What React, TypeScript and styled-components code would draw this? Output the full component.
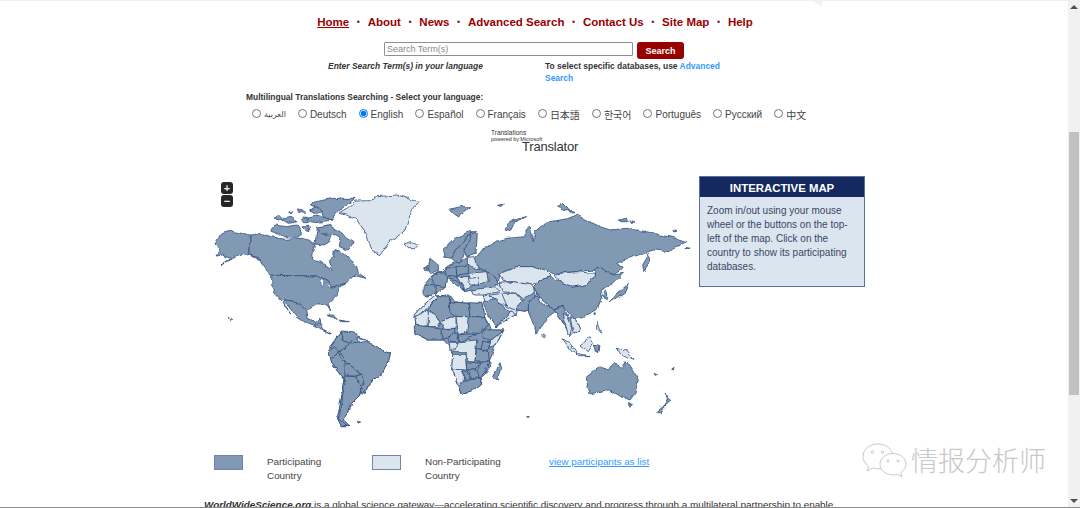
import styled, { createGlobalStyle } from "styled-components";

const GlobalStyle = createGlobalStyle`
    html, body {
        margin: 0;
        padding: 0;
        background: #fff;
        overflow: hidden;
    }
    body {
        font-family: "Liberation Sans", Arial, sans-serif;
    }
`;

type Tone = "on" | "off" | "water";
type Land = [Tone, string];

const navLinks = ["Home", "About", "News", "Advanced Search", "Contact Us", "Site Map", "Help"];

const languages = [
    "العربية",
    "Deutsch",
    "English",
    "Español",
    "Français",
    "日本語",
    "한국어",
    "Português",
    "Русский",
    "中文",
];

// traced off the screenshot, 3 map units = 1px
const westLands: Land[] = [
    ["on", "390,530 425,483 470,500 505,512 520,530 572,550 565,575 545,615 515,630 495,670 480,675 455,700 445,730 430,750 450,770 425,770 410,740 420,690 432,630 395,580 388,545"],
    ["on", "45,222 55,205 62,192 92,183 150,195 150,255 172,262 195,288 178,272 150,256 125,250 100,265 60,287 92,266 70,255 48,258 60,240"],
    ["on", "345,222 352,172 385,165 395,190 385,218 372,225"],
    ["on", "150,195 185,190 212,200 240,205 255,208 300,205 330,210 345,222 335,258 345,272 360,275 382,290 397,302 385,275 400,262 403,238 425,245 445,262 470,290 475,308 498,325 470,318 452,322 440,340 415,345 395,352 385,335 365,325 350,318 220,316 205,308 188,285 172,262 150,255"],
    ["on", "352,172 385,165 420,185 462,215 445,240 415,230 420,205 395,190 365,195"],
    ["on", "212,180 225,165 260,170 290,165 305,190 290,202 250,200 235,190"],
    ["on", "222,145 240,133 250,145 235,150"],
    ["on", "245,148 270,142 290,155 265,160"],
    ["on", "262,125 275,128 270,135"],
    ["on", "292,120 310,122 316,130 300,128"],
    ["on", "305,145 320,140 325,155 310,155"],
    ["on", "305,170 325,165 330,185 315,180"],
    ["on", "345,95 400,85 465,85 420,120 395,150 370,140 360,115 330,105"],
    ["on", "325,120 350,110 365,125 350,130"],
    ["on", "322,142 350,135 395,150 350,158 330,155"],
    ["off", "420,130 445,115 465,93 520,92 530,80 590,75 620,85 660,97 640,115 630,135 615,180 605,190 570,215 540,255 515,240 500,190 470,150 440,135"],
    ["on", "215,316 350,318 365,325 385,335 395,352 415,345 440,340 420,350 410,375 385,400 392,425 382,405 350,405 325,418 315,415 290,398 270,395 245,392 225,370 215,345"],
    ["water", "360,328 372,332 368,350 360,345"],
    ["water", "378,340 392,345 388,352"],
    ["on", "250,393 270,395 300,400 320,420 325,445 345,455 360,445 362,460 345,470 320,460 290,440 270,410"],
    ["on", "250,397 275,435 258,412"],
    ["on", "345,462 362,458 368,480 395,495 385,490 360,478 345,468"],
    ["on", "375,436 400,435 415,448 395,442"],
    ["on", "420,450 445,455 425,455"],
    ["on", "85,442 88,444 86,446"],
    ["on", "91,448 96,450 92,452"],
    ["on", "425,483 460,485 470,500 445,520 425,510"],
    ["off", "470,505 505,510 490,520 475,515"],
    ["on", "390,530 405,510 425,483 425,510 445,520 435,545 420,545 415,560 395,535"],
    ["on", "388,545 400,530 415,545 400,565 390,560"],
    ["on", "392,565 415,550 425,570 440,575 435,605 440,635 430,625 395,580"],
    ["on", "420,545 445,522 475,520 505,512 520,530 572,550 565,575 545,615 515,630 495,670 480,650 495,640 480,610 460,590 435,570"],
    ["on", "435,572 460,590 480,615 465,618 435,618"],
    ["on", "468,620 483,612 495,635 480,645"],
    ["on", "435,618 465,620 485,650 480,675 455,700 445,730 430,750 450,770 425,765 415,745 425,700 430,650"],
    ["on", "432,630 420,690 410,740 425,770 440,770 415,745 425,690 435,640"],
    ["on", "480,655 497,660 485,672"],
    ["on", "467,752 480,752 472,756"],
];

const eastLands: Land[] = [
    ["on", "105,378 145,375 165,395 205,400 245,400 255,440 272,480 312,480 285,530 268,570 272,590 240,625 245,640 220,660 185,670 175,640 155,597 158,553 150,530 130,510 85,510 45,490 42,435 65,410"],
    ["on", "72,345 95,318 130,300 140,290 205,262 225,290 270,310 295,340 300,365 250,375 215,360 195,365 170,335 140,322 135,350 105,372 80,378"],
    ["off", "270,350 300,340 400,350 420,385 385,425 350,420 345,435 285,468 265,435 250,375"],
    ["off", "462,420 505,440 525,445 540,480 520,490 510,500 498,470 480,445"],
    ["off", "15,222 35,215 55,222 45,233 25,233"],
    ["on", "150,118 180,110 215,110 195,125 175,140 160,130"],
    ["on", "292,105 310,103 302,110"],
    ["on", "315,180 325,160 355,145 380,140 345,155 330,185"],
    ["on", "473,105 490,100 510,120 490,125"],
    ["on", "505,122 525,128 510,130"],
    ["on", "652,150 680,145 682,155 660,155"],
    ["on", "690,152 705,156 695,157"],
    ["on", "818,182 830,184 822,186"],
    ["on", "222,270 250,235 285,215 320,205 375,200 375,180 390,168 400,215 405,180 450,155 505,145 530,135 560,150 600,170 630,180 680,175 740,185 780,195 830,205 860,215 820,235 810,245 760,240 700,260 650,280 670,295 640,315 600,295 585,300 530,305 465,310 440,305 400,290 350,290 300,310 295,340 270,310 225,290"],
    ["on", "745,250 750,275 730,305 725,285"],
    ["on", "855,235 865,238 858,238"],
    ["off", "297,312 350,290 400,290 440,305 455,320 420,330 395,345 340,335 310,335"],
    ["off", "465,312 530,305 585,310 582,325 555,345 520,352 480,335"],
    ["on", "400,350 420,330 455,320 480,335 520,352 555,345 582,325 585,298 605,295 640,315 670,310 635,345 600,360 605,385 590,420 550,440 520,445 490,410 460,420 420,385 410,365"],
    ["on", "385,395 410,375 425,400 460,420 490,410 465,425 445,440 425,470 412,495 395,450 385,425"],
    ["off", "426,492 433,495 431,503 426,501"],
    ["off", "300,340 340,335 395,345 400,350 405,375 380,395 350,370 310,365"],
    ["off", "310,370 350,370 370,395 350,420 320,410 300,380"],
    ["on", "350,415 375,385 400,370 410,378 385,395 385,425 350,420"],
    ["off", "215,360 285,350 300,365 250,375 220,375"],
    ["off", "270,375 305,370 320,405 290,395"],
    ["on", "250,395 285,385 310,410 335,430 310,450 285,468 265,435 252,408"],
    ["off", "285,470 310,450 335,420 345,435"],
    ["on", "130,240 165,205 210,185 230,185 195,205 170,240 155,265 135,262"],
    ["on", "170,240 195,205 215,190 215,215 190,250 180,280 165,275 155,265"],
    ["on", "215,190 232,190 228,250 200,260 192,245"],
    ["on", "85,300 90,265 115,285 115,305 90,310"],
    ["on", "70,295 85,285 80,303"],
    ["on", "95,318 130,305 140,320 135,350 105,345"],
    ["on", "72,345 105,348 105,372 80,378 72,370"],
    ["on", "135,295 170,290 170,320 140,320"],
    ["on", "168,290 205,285 205,310 170,315"],
    ["off", "205,262 225,260 235,300 205,285"],
    ["off", "205,310 260,305 265,335 225,345 205,325"],
    ["on", "140,322 170,330 195,365 175,350"],
    ["off", "170,320 205,320 220,345 195,360"],
    ["off", "205,325 235,322 235,345 210,345"],
    ["off", "65,410 100,380 115,378 85,412 45,445 42,435"],
    ["on", "85,415 115,378 148,378 150,420 168,435 120,455"],
    ["off", "42,440 82,420 100,465 65,470 45,465"],
    ["off", "85,420 120,455 110,470 85,470"],
    ["on", "148,395 205,400 210,440 170,440 150,425"],
    ["on", "205,398 245,400 255,440 210,440"],
    ["off", "120,455 168,435 168,475 130,475"],
    ["off", "168,440 205,440 205,485 175,495"],
    ["on", "205,440 255,440 262,465 250,480 240,490 200,488"],
    ["on", "245,480 272,480 310,480 275,510 250,505"],
    ["off", "310,480 285,530 270,535 275,510"],
    ["on", "42,465 130,475 130,510 85,510 45,490"],
    ["on", "122,478 165,475 160,500 130,508"],
    ["on", "160,490 172,490 178,520 145,515"],
    ["on", "175,495 230,490 200,510 175,515"],
    ["off", "178,515 230,510 225,572 205,572 195,545 155,545 150,530"],
    ["off", "148,520 172,520 165,540 150,540"],
    ["on", "245,515 275,515 265,545 240,540"],
    ["on", "230,535 265,545 268,570 245,580 225,570"],
    ["off", "158,553 195,553 200,600 155,597"],
    ["off", "155,597 190,600 190,650 175,640"],
    ["on", "245,585 270,570 265,590 240,620 238,640 228,610"],
    ["on", "200,575 245,580 225,600 200,600"],
    ["on", "200,600 228,600 235,620 215,625"],
    ["on", "190,600 215,625 195,635"],
    ["on", "178,645 195,635 215,625 238,625 245,640 220,660 185,670"],
    ["on", "300,578 305,595 292,630 280,622"],
    ["on", "462,420 490,410 505,440 498,470 480,445"],
    ["off", "490,430 505,440 515,470 510,500 498,470"],
    ["off", "510,440 525,445 540,480 520,490"],
    ["off", "487,505 510,520 535,555 515,545"],
    ["off", "525,553 570,560 535,560"],
    ["off", "540,525 570,500 580,520 565,545"],
    ["on", "585,525 600,530 597,545 588,540"],
    ["off", "645,535 680,540 705,568 670,555"],
    ["off", "590,455 605,490 590,475"],
    ["on", "625,395 670,355 685,340 675,365 640,390"],
    ["on", "610,365 620,360 620,385 610,385"],
    ["on", "585,428 590,430 586,436"],
    ["on", "558,625 600,590 625,600 640,578 665,595 675,572 715,630 705,670 690,690 660,678 630,660 570,675"],
    ["on", "682,698 697,700 690,712"],
    ["on", "795,672 815,688 795,705 802,685"],
    ["on", "770,725 795,705 785,725"],
    ["on", "815,598 822,592 820,600"],
    ["on", "763,610 770,614 765,616"],
    ["on", "380,740 388,740 384,743"],
];

export default function App() {
    return (
        <Page>
            <GlobalStyle />
            <Main>
                <TopCorner />
                <Nav>
                    {navLinks.map((link, ind) => (
                        <NavItem key={link}>
                            {ind > 0 && <NavDot>•</NavDot>}
                            <NavLink $active={ind === 0}>{link}</NavLink>
                        </NavItem>
                    ))}
                </Nav>
                <SearchRow>
                    <SearchInput placeholder="Search Term(s)" />
                    <SearchButton>Search</SearchButton>
                </SearchRow>
                <HintRow>
                    <HintLeft>Enter Search Term(s) in your language</HintLeft>
                    <HintRight>
                        To select specific databases, use <BlueLink>Advanced Search</BlueLink>
                    </HintRight>
                </HintRow>
                <LangTitle>Multilingual Translations Searching - Select your language:</LangTitle>
                <LangRow>
                    {languages.map((lang, ind) => (
                        <LangLabel key={lang}>
                            <Radio type="radio" name="lang" defaultChecked={lang === "English"} />
                            <LangName $small={ind === 0}>{lang}</LangName>
                        </LangLabel>
                    ))}
                </LangRow>
                <TranslatorLogo>
                    <LogoTiny>Translations</LogoTiny>
                    <LogoPowered>powered by Microsoft</LogoPowered>
                    <LogoName>Translator</LogoName>
                </TranslatorLogo>
                <MapRow>
                    <MapBox>
                        <ZoomButtons>
                            <ZoomButton>+</ZoomButton>
                            <ZoomButton>−</ZoomButton>
                        </ZoomButtons>
                        <svg width="500" height="270" viewBox="0 0 1500 810">
                            <defs>
                                <filter id="coast" x="0" y="0" width="100%" height="100%">
                                    <feTurbulence type="fractalNoise" baseFrequency="0.035" numOctaves="3" seed="4" />
                                    <feDisplacementMap in="SourceGraphic" scale="14" xChannelSelector="R" yChannelSelector="G" />
                                    <feGaussianBlur stdDeviation="0.7" />
                                </filter>
                            </defs>
                            <g filter="url(#coast)">
                                <rect width="1500" height="810" fill="none" />
                                {westLands.map(([tone, points], ind) => (
                                    <Country key={ind} $tone={tone} points={points} />
                                ))}
                                <g transform="translate(600 0)">
                                    {eastLands.map(([tone, points], ind) => (
                                        <Country key={ind} $tone={tone} points={points} />
                                    ))}
                                </g>
                            </g>
                        </svg>
                    </MapBox>
                    <InfoPanel>
                        <InfoHead>INTERACTIVE MAP</InfoHead>
                        <InfoBody>
                            Zoom in/out using your mouse wheel or the buttons on the top-left of the
                            map. Click on the country to show its participating databases.
                        </InfoBody>
                    </InfoPanel>
                </MapRow>
                <Legend>
                    <Swatch $on />
                    <LegendText>
                        Participating
                        <br />
                        Country
                    </LegendText>
                    <Swatch />
                    <LegendText>
                        Non-Participating
                        <br />
                        Country
                    </LegendText>
                    <ListLink>view participants as list</ListLink>
                </Legend>
                <Intro>
                    <b>
                        <i>WorldWideScience.org</i>
                    </b>{" "}
                    is a global science gateway—accelerating scientific discovery and progress
                    through a multilateral partnership to enable
                </Intro>
            </Main>
            <ScrollTrack>
                <ArrowUp />
                <ScrollThumb />
                <ArrowDown />
            </ScrollTrack>
            <Watermark>
                <svg width="48" height="34" viewBox="0 0 48 34" fill="#fff" stroke="#c9c9c9" strokeWidth="1">
                    <path d="M16 1C7.5 1 1 6.5 1 13.5c0 4 2.2 7.4 5.6 9.7L5 28l5.6-3c1.8.5 3.6.8 5.4.8 8.5 0 15-5.6 15-12.3S24.5 1 16 1z" />
                    <path d="M31 10.5c-7.2 0-13 4.8-13 10.7s5.8 10.7 13 10.7c1.5 0 2.9-.2 4.2-.6l4.8 2.5-1.3-4.2c3.3-2 5.3-5 5.3-8.4 0-5.9-5.8-10.7-13-10.7z" />
                    <circle cx="10.5" cy="9" r="1.3" />
                    <circle cx="20.5" cy="9" r="1.3" />
                    <circle cx="26" cy="18" r="1.1" />
                    <circle cx="36" cy="18" r="1.1" />
                </svg>
                <WatermarkText>情报分析师</WatermarkText>
            </Watermark>
        </Page>
    );
}

const Page = styled.div`
    position: relative;
    display: flex;
    width: 1080px;
    height: 508px;
    box-sizing: border-box;
    border-bottom: 1px solid #8a8a8a;
    overflow: hidden;
`;

const Main = styled.div`
    position: relative;
    flex: 1;
    min-width: 0;
    border-top: 1px solid #eef0f6;
`;

const TopCorner = styled.div`
    position: absolute;
    top: 0;
    left: 813px;
    border-top: 6px solid #eef1f6;
    border-left: 9px solid transparent;
`;

const Nav = styled.div`
    display: flex;
    justify-content: center;
    align-items: center;
    height: 13px;
    margin-top: 14px;
    padding-left: 2px;
`;

const NavItem = styled.div`
    display: flex;
    align-items: center;
`;

const NavDot = styled.span`
    width: 18.5px;
    text-align: center;
    font-size: 9px;
    color: #8a2020;
`;

const NavLink = styled.a<{ $active?: boolean }>`
    font-size: 11.5px;
    font-weight: 700;
    color: #990000;
    text-decoration: ${(props) => (props.$active ? "underline" : "none")};
`;

const SearchRow = styled.div`
    display: flex;
    align-items: flex-start;
    gap: 4px;
    margin-top: 14px;
    padding-left: 384px;
`;

const SearchInput = styled.input`
    width: 249px;
    height: 14px;
    box-sizing: border-box;
    padding: 0 2px;
    border: 1px solid #8f8f8f;
    border-radius: 1px;
    font-family: "Liberation Sans", Arial, sans-serif;
    font-size: 9px;
    outline: none;

    &::placeholder {
        color: #8a8a8a;
    }
`;

const SearchButton = styled.button`
    width: 47px;
    height: 17px;
    padding: 0;
    border: none;
    border-radius: 3px;
    background: #990000;
    color: #fff;
    font-family: "Liberation Sans", Arial, sans-serif;
    font-size: 9px;
    font-weight: 700;
`;

const HintRow = styled.div`
    display: grid;
    grid-template-columns: 217px 176px;
    margin-top: 1px;
    padding-left: 328px;
    font-size: 8.45px;
    line-height: 12px;
    font-weight: 700;
    color: #333;
`;

const HintLeft = styled.div`
    font-style: italic;
`;

const HintRight = styled.div``;

const BlueLink = styled.a`
    color: #3399ff;
`;

const LangTitle = styled.div`
    margin-top: 7px;
    padding-left: 246px;
    font-size: 8.45px;
    line-height: 12px;
    font-weight: 700;
    color: #333;
`;

const LangRow = styled.div`
    display: flex;
    gap: 12px;
    margin-top: 3px;
    padding-left: 252px;
    height: 16px;
    align-items: center;
`;

const LangLabel = styled.label`
    display: flex;
    align-items: center;
    gap: 3px;
    color: #444;
    font-family: "Liberation Sans", "DejaVu Sans", "Noto Sans CJK JP", sans-serif;
`;

const LangName = styled.span<{ $small?: boolean }>`
    font-size: ${(props) => (props.$small ? "8px" : "10px")};
`;

const Radio = styled.input`
    width: 9px;
    height: 9px;
    margin: 0 0 2px;
`;

const TranslatorLogo = styled.div`
    display: flex;
    flex-direction: column;
    margin-top: 7px;
    margin-left: 491px;
    width: 90px;
    height: 27px;
    color: #333;
`;

const LogoTiny = styled.span`
    font-size: 6.5px;
    line-height: 7px;
`;

const LogoPowered = styled.span`
    font-size: 5.4px;
    line-height: 6px;
`;

const LogoName = styled.span`
    margin-left: 31px;
    margin-top: -2px;
    font-size: 13px;
    line-height: 14px;
    letter-spacing: -0.2px;
`;

const MapRow = styled.div`
    display: flex;
    align-items: flex-start;
    margin-top: 14px;
    padding-left: 200px;
`;

const MapBox = styled.div`
    position: relative;
    width: 499px;
    height: 270px;
`;

const ZoomButtons = styled.div`
    position: absolute;
    top: 12px;
    left: 21px;
    display: flex;
    flex-direction: column;
    gap: 1px;
`;

const ZoomButton = styled.div`
    width: 12px;
    height: 12px;
    border-radius: 3px;
    background: #262626;
    color: #e4eef8;
    font-size: 11px;
    line-height: 12px;
    font-weight: 700;
    text-align: center;
`;

const Country = styled.polygon<{ $tone: Tone }>`
    fill: ${(props) =>
        props.$tone === "on" ? "#8299b3" : props.$tone === "off" ? "#dbe5ee" : "#fff"};
    stroke: ${(props) => (props.$tone === "water" ? "#54709a" : "#34517f")};
    stroke-width: 2.5;
    stroke-linejoin: round;
`;

const InfoPanel = styled.div`
    width: 166px;
    height: 111px;
    box-sizing: border-box;
    margin-top: 6px;
    border: 1px solid #5d6f9e;
    background: #dae5ef;
`;

const InfoHead = styled.div`
    height: 20px;
    background: #14295f;
    color: #fff;
    font-size: 11.4px;
    line-height: 22px;
    font-weight: 700;
    text-align: center;
`;

const InfoBody = styled.div`
    padding: 7px 7px 0;
    font-size: 10px;
    line-height: 14px;
    color: #3c4666;
`;

const Legend = styled.div`
    display: grid;
    grid-template-columns: 29px 81px 29px 100px auto;
    column-gap: 24px;
    margin-top: 15px;
    padding-left: 214px;
`;

const Swatch = styled.div<{ $on?: boolean }>`
    height: 15px;
    box-sizing: border-box;
    border: 1px solid #6f84a8;
    background: ${(props) => (props.$on ? "#8299b3" : "#dbe5ee")};
`;

const LegendText = styled.div`
    font-size: 9.9px;
    line-height: 14px;
    color: #444;
`;

const ListLink = styled.a`
    font-size: 9.8px;
    line-height: 14px;
    color: #3399ff;
    text-decoration: underline;
`;

const Intro = styled.div`
    margin-top: 15px;
    padding-left: 204px;
    font-size: 9.9px;
    line-height: 14px;
    color: #333;
    white-space: nowrap;
`;

const ScrollTrack = styled.div`
    display: flex;
    flex-direction: column;
    align-items: center;
    width: 12px;
    background: #f1f1f1;
`;

const ArrowUp = styled.div`
    margin-top: 5px;
    border-bottom: 4px solid #505050;
    border-left: 4px solid transparent;
    border-right: 4px solid transparent;
`;

const ScrollThumb = styled.div`
    width: 10px;
    height: 263px;
    margin-top: 123px;
    background: #c1c1c1;
`;

const ArrowDown = styled.div`
    margin-top: auto;
    margin-bottom: 4px;
    border-top: 4px solid #505050;
    border-left: 4px solid transparent;
    border-right: 4px solid transparent;
`;

const Watermark = styled.div`
    position: absolute;
    top: 443px;
    left: 862px;
    display: flex;
    align-items: center;
    gap: 1px;
`;

const WatermarkText = styled.span`
    font-family: "Noto Sans CJK SC", sans-serif;
    font-size: 27px;
    font-weight: 300;
    line-height: 34px;
    color: #c8c8c8;
`;
